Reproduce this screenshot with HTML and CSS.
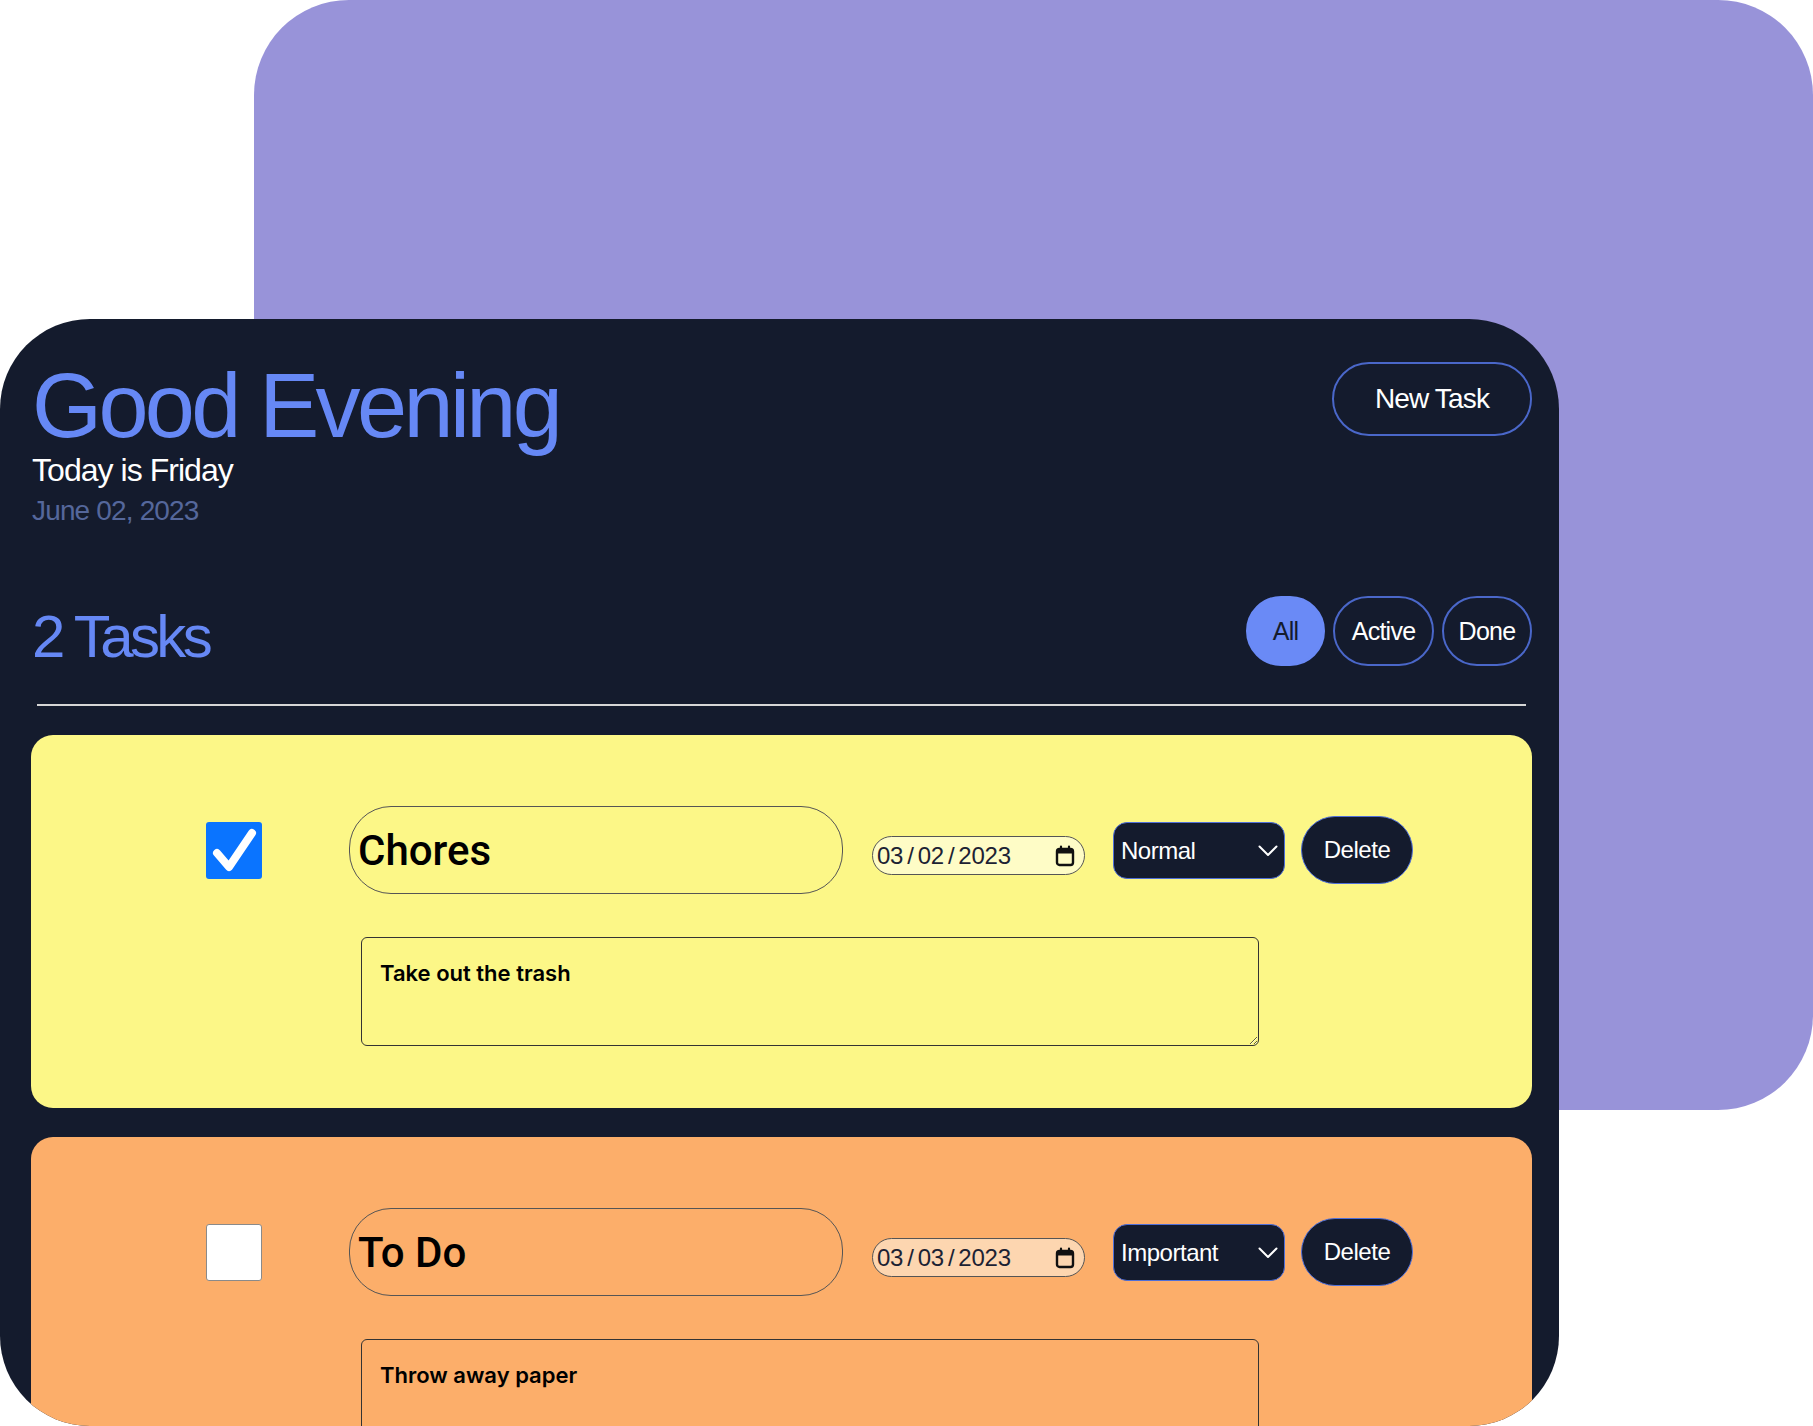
FILE: index.html
```html
<!DOCTYPE html>
<html lang="en">
<head>
<meta charset="utf-8">
<title>Tasks</title>
<link rel="stylesheet" href="styles.css">
</head>
<body>
<div class="stage">
  <div class="backdrop"></div>
  <main class="app">
    <header class="header">
      <div class="greeting">
        <h1 class="title">Good Evening</h1>
        <p class="today">Today is Friday</p>
        <p class="date">June 02, 2023</p>
      </div>
      <button class="btn-new">New Task</button>
    </header>

    <section class="tasks-bar">
      <h2 class="count">2 Tasks</h2>
      <div class="filters">
        <button class="filter f-all active">All</button>
        <button class="filter f-active">Active</button>
        <button class="filter f-done">Done</button>
      </div>
    </section>
    <hr class="divider">

    <div class="list">
      <article class="task yellow">
        <div class="task-row">
          <span class="check checked">
            <svg viewBox="0 0 56 57" width="56" height="57"><path d="M11 31 L23 45 L46 11" fill="none" stroke="#fff" stroke-width="8" stroke-linecap="round" stroke-linejoin="round"/></svg>
          </span>
          <input class="task-title" type="text" value="Chores">
          <div class="due">
            <span class="due-text">03<span class="sep">/</span>02<span class="sep">/</span>2023</span>
            <svg class="cal" viewBox="0 0 20 22" width="20" height="22"><rect x="2" y="4" width="16" height="16" rx="2.5" fill="none" stroke="#111" stroke-width="2.4"/><rect x="2" y="4" width="16" height="4.5" fill="#111"/><path d="M6 1.5v3M14 1.5v3" stroke="#111" stroke-width="2.2" stroke-linecap="round"/></svg>
          </div>
          <div class="priority">
            <select class="priority-select"><option>Normal</option><option>Important</option></select>
            <svg class="chev" viewBox="0 0 20 12" width="20" height="12"><path d="M1.5 1.5 L10 10 L18.5 1.5" fill="none" stroke="#fff" stroke-width="2" stroke-linecap="round" stroke-linejoin="round"/></svg>
          </div>
          <button class="btn-delete">Delete</button>
        </div>
        <textarea class="notes">Take out the trash</textarea>
      </article>

      <article class="task orange">
        <div class="task-row">
          <span class="check"></span>
          <input class="task-title" type="text" value="To Do">
          <div class="due">
            <span class="due-text">03<span class="sep">/</span>03<span class="sep">/</span>2023</span>
            <svg class="cal" viewBox="0 0 20 22" width="20" height="22"><rect x="2" y="4" width="16" height="16" rx="2.5" fill="none" stroke="#111" stroke-width="2.4"/><rect x="2" y="4" width="16" height="4.5" fill="#111"/><path d="M6 1.5v3M14 1.5v3" stroke="#111" stroke-width="2.2" stroke-linecap="round"/></svg>
          </div>
          <div class="priority">
            <select class="priority-select"><option>Important</option><option>Normal</option></select>
            <svg class="chev" viewBox="0 0 20 12" width="20" height="12"><path d="M1.5 1.5 L10 10 L18.5 1.5" fill="none" stroke="#fff" stroke-width="2" stroke-linecap="round" stroke-linejoin="round"/></svg>
          </div>
          <button class="btn-delete">Delete</button>
        </div>
        <textarea class="notes">Throw away paper</textarea>
      </article>
    </div>
  </main>
</div>
</body>
</html>
```

FILE: styles.css
```css
html, body {
  margin: 0;
  padding: 0;
  width: 1813px;
  height: 1426px;
  overflow: hidden;
  background: #ffffff;
}

.stage {
  position: relative;
  height: 1426px;
  padding-top: 319px;
  box-sizing: border-box;
  font-family: "Liberation Sans", Arial, sans-serif;
}

.backdrop {
  position: absolute;
  left: 254px;
  top: 0;
  width: 1559px;
  height: 1110px;
  border-radius: 95px;
  background: #9893d9;
}

.app {
  position: relative;
  width: 1559px;
  height: 1107px;
  box-sizing: border-box;
  border-radius: 90px;
  background: #141b2d;
  overflow: hidden;
  padding: 42px 27px 0 31px;
}

.header {
  display: flex;
  justify-content: space-between;
  align-items: flex-start;
}

.greeting {
  padding-left: 1px;
}

.title {
  margin: 0;
  font-size: 90px;
  line-height: 90px;
  font-weight: 400;
  letter-spacing: -0.04em;
  color: #6688f5;
}

.today {
  margin: 0;
  font-size: 32px;
  line-height: 38px;
  letter-spacing: -0.03em;
  color: #ffffff;
}

.date {
  margin: 5px 0 0;
  font-size: 28px;
  line-height: 34px;
  letter-spacing: -0.03em;
  color: #55679b;
}

.btn-new {
  margin-top: 1px;
  width: 200px;
  height: 74px;
  border: 2px solid #4a67c9;
  border-radius: 37px;
  background: transparent;
  color: #ffffff;
  font-family: inherit;
  font-size: 28px;
  letter-spacing: -0.03em;
  cursor: pointer;
}

.tasks-bar {
  display: flex;
  justify-content: space-between;
  align-items: center;
  margin-top: 62px;
}

.count {
  margin: 12px 0 0 1px;
  font-size: 60px;
  line-height: 70px;
  font-weight: 400;
  letter-spacing: -0.06em;
  color: #6688f5;
}

.filters {
  display: flex;
  gap: 8px;
}

.filter {
  height: 70px;
  padding: 0;
  border: 2px solid #4a67c9;
  border-radius: 35px;
  background: transparent;
  color: #ffffff;
  font-family: inherit;
  font-size: 25px;
  letter-spacing: -0.03em;
}

.f-all {
  width: 79px;
}

.f-active {
  width: 101px;
}

.f-done {
  width: 90px;
}

.filter.active {
  background: #6a8af6;
  border-color: #6a8af6;
  color: #141b2d;
}

.divider {
  margin: 32px 6px 0 6px;
  border: 0;
  height: 2px;
  background: #d6d6d6;
}

.list {
  display: flex;
  flex-direction: column;
  gap: 29px;
  margin-top: 29px;
}

.task {
  border-radius: 22px;
  padding: 71px 0 62px 175px;
}

.task.yellow {
  background: #fcf787;
}

.task.orange {
  background: #fcae6a;
}

.task-row {
  display: flex;
  align-items: center;
}

.check {
  flex: none;
  width: 56px;
  height: 57px;
  border-radius: 3px;
  box-sizing: border-box;
  background: #ffffff;
  border: 1.5px solid #8a8a8a;
}

.check.checked {
  background: #0a74ff;
  border: 0;
}

.check svg {
  display: block;
}

.task-title {
  margin-left: 87px;
  width: 494px;
  height: 88px;
  box-sizing: border-box;
  border: 1.5px solid #555555;
  border-radius: 42px;
  background: transparent;
  padding: 0 8px;
  font-family: Roboto, "Liberation Sans", sans-serif;
  font-weight: 500;
  font-size: 42px;
  color: #000000;
  outline: none;
}

.due {
  margin-left: 29px;
  margin-top: 11px;
  width: 213px;
  height: 39px;
  box-sizing: border-box;
  display: flex;
  align-items: center;
  justify-content: space-between;
  padding: 0 9px 0 4px;
  border: 1.5px solid #555555;
  border-radius: 20px;
  font-size: 24px;
  letter-spacing: -0.01em;
  color: #1c2233;
}

.yellow .due {
  background: #fefcc6;
}

.orange .due {
  background: #fdd6b0;
}

.sep {
  margin: 0 4px;
}

.cal {
  display: block;
}

.priority {
  position: relative;
  margin-left: 28px;
}

.priority-select {
  display: block;
  width: 172px;
  height: 57px;
  box-sizing: border-box;
  appearance: none;
  -webkit-appearance: none;
  border: 1.5px solid #4f6fd8;
  border-radius: 14px;
  background: #141b2d;
  color: #ffffff;
  padding: 0 0 0 7px;
  font-family: "Liberation Sans", Arial, sans-serif;
  font-size: 24px;
  letter-spacing: -0.02em;
}

.chev {
  position: absolute;
  right: 7px;
  top: 23px;
  pointer-events: none;
}

.btn-delete {
  margin-left: 16px;
  width: 112px;
  height: 68px;
  border: 1.5px solid #4f6fd8;
  border-radius: 34px;
  background: #141b2d;
  color: #ffffff;
  font-family: inherit;
  font-size: 24px;
  letter-spacing: -0.02em;
}

.notes {
  display: block;
  margin: 43px 0 0 155px;
  width: 898px;
  height: 109px;
  box-sizing: border-box;
  border: 1.5px solid #333333;
  border-radius: 6px;
  background: transparent;
  padding: 22px 18px;
  font-family: Inter, "Liberation Sans", sans-serif;
  font-weight: 600;
  font-size: 22px;
  letter-spacing: 0;
  color: #000000;
  outline: none;
}
```
